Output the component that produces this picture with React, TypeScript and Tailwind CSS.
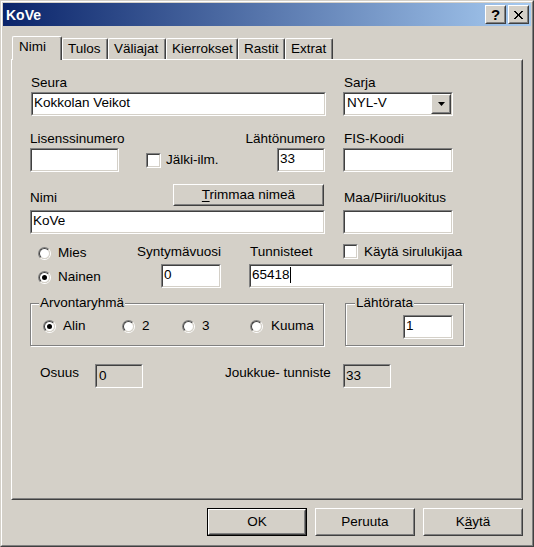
import React from "react";

const font = "font-['Liberation_Sans',Arial,sans-serif]";

type P = { className?: string; inner?: string; children?: React.ReactNode };

function Sunken({ className = "", inner = "bg-white", children }: P) {
  return (
    <div className={`border border-t-[#808080] border-l-[#808080] border-r-white border-b-white ${className}`}>
      <div className={`h-full w-full border border-t-[#404040] border-l-[#404040] border-r-[#D4D0C8] border-b-[#D4D0C8] ${inner}`}>
        {children}
      </div>
    </div>
  );
}

function Raised({ className = "", inner = "", children }: P) {
  return (
    <div className={`border border-t-white border-l-white border-r-[#404040] border-b-[#404040] ${className}`}>
      <div className={`h-full w-full border border-t-[#D4D0C8] border-l-[#D4D0C8] border-r-[#808080] border-b-[#808080] bg-[#D4D0C8] flex items-center justify-center ${inner}`}>
        {children}
      </div>
    </div>
  );
}

function Radio({ checked = false }: { checked?: boolean }) {
  return (
    <div className="w-[13px] h-[13px] shrink-0 rounded-full border border-t-[#808080] border-l-[#808080] border-r-white border-b-white">
      <div className="w-full h-full rounded-full border border-t-[#404040] border-l-[#404040] border-r-[#D4D0C8] border-b-[#D4D0C8] bg-white flex items-center justify-center">
        {checked && <div className="w-[5px] h-[5px] rounded-full bg-black" />}
      </div>
    </div>
  );
}

function Check() {
  return <Sunken className="w-[15px] h-[15px] shrink-0" />;
}

function TitleBtn({ children }: { children: React.ReactNode }) {
  return (
    <Raised className="w-[21px] h-[19px]">{children}</Raised>
  );
}

function Tab({ label, className = "" }: { label: string; className?: string }) {
  return (
    <div
      className={`h-[21px] mb-px border-l border-t border-r border-l-white border-t-white border-r-[#404040] rounded-tl-[2px] rounded-tr-[2px] shadow-[inset_-1px_0_0_#808080] pl-[5px] pt-[2px] whitespace-nowrap ${className}`}
    >
      {label}
    </div>
  );
}

export default function App() {
  return (
    <div
      className={`w-[534px] h-[547px] bg-[#D4D0C8] text-black ${font} text-[13.5px] leading-[16px] border border-t-[#D4D0C8] border-l-[#D4D0C8] border-r-[#404040] border-b-[#404040]`}
    >
      <div className="h-full w-full border border-t-white border-l-white border-r-[#808080] border-b-[#808080] p-px flex flex-col">
        {/* Title bar */}
        <div className="h-[23px] shrink-0 flex items-center bg-linear-to-r/srgb from-[#0A246A] to-[#A6CAF0] pl-[3px] pr-[2px]">
          <span className="text-white font-bold text-[14px] leading-[16px]">KoVe</span>
          <div className="ml-auto flex gap-[2px]">
            <TitleBtn>
              <span className="font-bold text-[15px] leading-[15px]">?</span>
            </TitleBtn>
            <TitleBtn>
              <svg width="9" height="8" viewBox="0 0 9 8" shapeRendering="crispEdges">
                <path
                  fill="#000"
                  d="M0 0h2v1H0z M7 0h2v1H7z M1 1h2v1H1z M6 1h2v1H6z M2 2h2v1H2z M5 2h2v1H5z M3 3h3v1H3z M3 4h3v1H3z M2 5h2v1H2z M5 5h2v1H5z M1 6h2v1H1z M6 6h2v1H6z M0 7h2v1H0z M7 7h2v1H7z"
                />
              </svg>
            </TitleBtn>
          </div>
        </div>

        {/* Tabs */}
        <div className="mt-[10px] h-[24px] shrink-0 flex items-end pl-[9px]">
          <div className="relative z-10 w-[50px] h-[24px] bg-[#D4D0C8] border-l border-t border-r border-l-white border-t-white border-r-[#404040] rounded-tl-[2px] rounded-tr-[2px] shadow-[inset_-1px_0_0_#808080] pl-[6px] pt-[2px]">
            Nimi
          </div>
          <Tab label="Tulos" className="w-[46px]" />
          <Tab label="Väliajat" className="w-[58px]" />
          <Tab label="Kierrokset" className="w-[72px]" />
          <Tab label="Rastit" className="w-[47px]" />
          <Tab label="Extrat" className="w-[48px]" />
        </div>

        {/* Panel */}
        <div className="ml-[8px] -mt-px w-[512px] h-[441px] shrink-0 border border-t-white border-l-white border-r-[#404040] border-b-[#404040]">
          <div className="w-full h-full border border-t-[#D4D0C8] border-l-[#D4D0C8] border-r-[#808080] border-b-[#808080] flex flex-col">
            {/* Row A */}
            <div className="mt-[14px] h-[16px] flex">
              <div className="ml-[18px] w-[313px]">Seura</div>
              <div>Sarja</div>
            </div>
            {/* Row B */}
            <div className="mt-px flex">
              <Sunken className="ml-[18px] w-[295px] h-[24px]">
                <div className="pl-px pt-px whitespace-nowrap">Kokkolan Veikot</div>
              </Sunken>
              <Sunken className="ml-[17px] w-[110px] h-[24px]">
                <div className="flex h-full">
                  <div className="pl-[2px] pt-px">NYL-V</div>
                  <Raised className="ml-auto w-[20px] h-full">
                    <svg width="7" height="4" viewBox="0 0 7 4">
                      <path d="M0 0h7L3.5 4z" fill="#000" />
                    </svg>
                  </Raised>
                </div>
              </Sunken>
            </div>
            {/* Row C */}
            <div className="mt-[15px] h-[16px] flex">
              <div className="ml-[17px] w-[295px] flex justify-between">
                <span>Lisenssinumero</span>
                <span>Lähtönumero</span>
              </div>
              <div className="ml-[19px]">FIS-Koodi</div>
            </div>
            {/* Row D */}
            <div className="mt-px h-[24px] flex">
              <div className="ml-[17px] w-[295px] flex items-center">
                <Sunken className="w-[89px] h-[24px]" />
                <div className="ml-[27px]">
                  <Check />
                </div>
                <span className="ml-[5px]">Jälki-ilm.</span>
                <Sunken className="ml-auto w-[48px] h-[24px]">
                  <div className="pl-px pt-px">33</div>
                </Sunken>
              </div>
              <Sunken className="ml-[18px] w-[110px] h-[24px]" />
            </div>
            {/* Row E */}
            <div className="mt-[12px] h-[22px] flex">
              <div className="ml-[17px] w-[295px] flex">
                <span className="mt-[6px]">Nimi</span>
                <Raised className="ml-auto mr-px w-[151px] h-[22px]">
                  <span>
                    <span className="underline underline-offset-2">T</span>rimmaa nimeä
                  </span>
                </Raised>
              </div>
              <div className="ml-[19px] mt-[6px] whitespace-nowrap">Maa/Piiri/luokitus</div>
            </div>
            {/* Row F */}
            <div className="mt-[4px] h-[24px] flex">
              <Sunken className="ml-[17px] w-[295px] h-[24px]">
                <div className="pl-px pt-px">KoVe</div>
              </Sunken>
              <Sunken className="ml-[18px] w-[110px] h-[24px]" />
            </div>
            {/* Rows G/H */}
            <div className="mt-[10px] h-[44px] flex">
              <div className="w-[124px] pl-[25px] flex flex-col">
                <div className="h-[18px] flex items-center gap-[7px]">
                  <Radio />
                  <span>Mies</span>
                </div>
                <div className="mt-[6px] h-[18px] flex items-center gap-[7px]">
                  <Radio checked />
                  <span>Nainen</span>
                </div>
              </div>
              <div className="w-[112px] flex flex-col">
                <div className="h-[20px]">Syntymävuosi</div>
                <Sunken className="ml-[24px] w-[60px] h-[24px]">
                  <div className="pl-px pt-px">0</div>
                </Sunken>
              </div>
              <div className="flex flex-col">
                <div className="h-[20px] flex">
                  <div className="w-[94px] pl-px">Tunnisteet</div>
                  <div className="h-[15px] flex items-center gap-[6px]">
                    <Check />
                    <span className="whitespace-nowrap">Käytä sirulukijaa</span>
                  </div>
                </div>
                <Sunken className="w-[204px] h-[24px]">
                  <div className="pl-px pt-px flex">
                    <span>65418</span>
                    <span className="inline-block w-px h-[16px] bg-black" />
                  </div>
                </Sunken>
              </div>
            </div>
            {/* Group boxes */}
            <div className="mt-[15px] flex">
              <div className="relative ml-[17px] w-[294px] h-[43px] border border-[#808080] shadow-[inset_1px_1px_0_#fff,1px_1px_0_#fff]">
                <span className="absolute -top-[9px] left-[8px] px-px bg-[#D4D0C8]">Arvontaryhmä</span>
                <div className="mt-[13px] h-[18px] flex items-center">
                  <div className="ml-[12px] w-[79px] flex items-center gap-[7px]">
                    <Radio checked />
                    <span>Alin</span>
                  </div>
                  <div className="w-[60px] flex items-center gap-[7px]">
                    <Radio />
                    <span>2</span>
                  </div>
                  <div className="w-[68px] flex items-center gap-[7px]">
                    <Radio />
                    <span>3</span>
                  </div>
                  <div className="flex items-center gap-[8px]">
                    <Radio />
                    <span>Kuuma</span>
                  </div>
                </div>
              </div>
              <div className="relative ml-[21px] w-[119px] h-[43px] border border-[#808080] shadow-[inset_1px_1px_0_#fff,1px_1px_0_#fff]">
                <span className="absolute -top-[9px] left-[9px] px-px bg-[#D4D0C8]">Lähtörata</span>
                <Sunken className="ml-[57px] mt-[11px] w-[50px] h-[24px]">
                  <div className="pl-px pt-px">1</div>
                </Sunken>
              </div>
            </div>
            {/* Osuus row */}
            <div className="mt-[18px] h-[24px] flex">
              <div className="ml-[27px] w-[55px] mt-px">Osuus</div>
              <Sunken className="w-[48px] h-[24px]" inner="bg-[#D4D0C8]">
                <div className="pl-[2px] pt-[2px]">0</div>
              </Sunken>
              <div className="ml-[82px] w-[118px] mt-px whitespace-nowrap">Joukkue- tunniste</div>
              <Sunken className="w-[48px] h-[24px]" inner="bg-[#D4D0C8]">
                <div className="pl-px pt-[2px]">33</div>
              </Sunken>
            </div>
          </div>
        </div>

        {/* Bottom buttons */}
        <div className="mt-[8px] flex justify-end gap-[8px] pr-[8px]">
          <div className="w-[100px] h-[28px] border border-black">
            <Raised className="w-full h-full">OK</Raised>
          </div>
          <Raised className="w-[100px] h-[28px]">Peruuta</Raised>
          <Raised className="w-[100px] h-[28px]">
            <span>
              K<span className="underline underline-offset-2">ä</span>ytä
            </span>
          </Raised>
        </div>
      </div>
    </div>
  );
}
